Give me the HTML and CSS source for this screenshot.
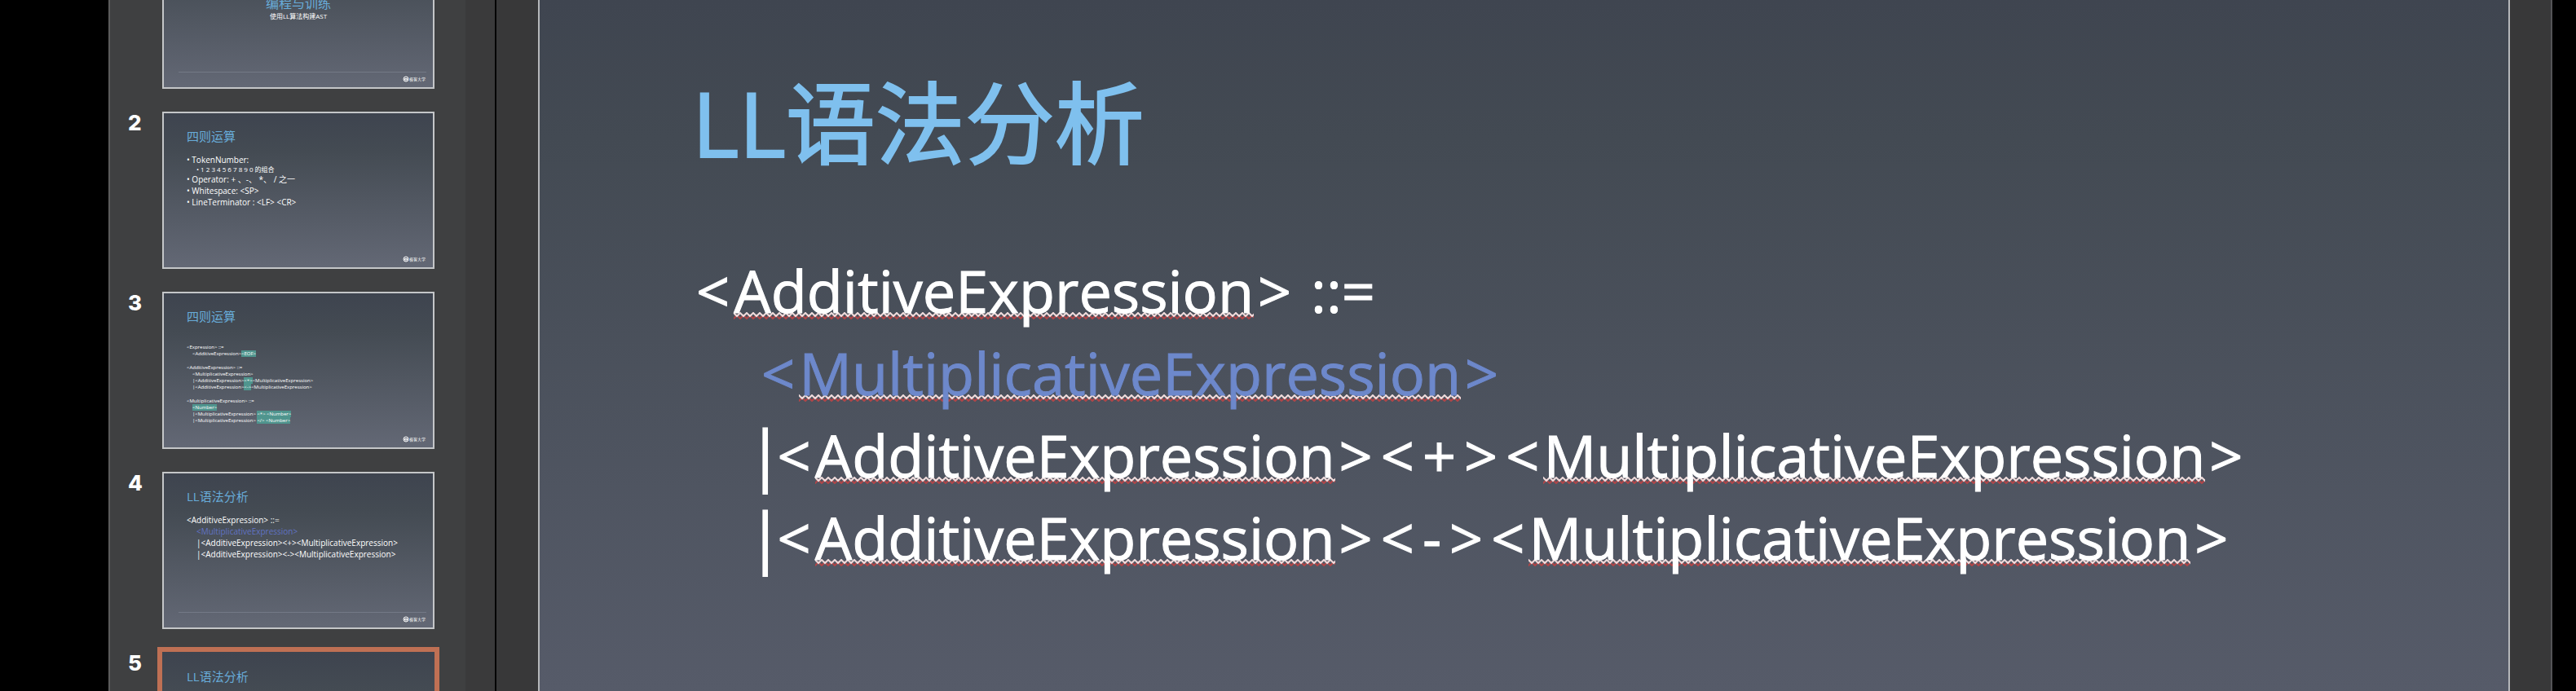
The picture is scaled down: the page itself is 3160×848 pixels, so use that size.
FILE: index.html
```html
<!DOCTYPE html>
<html lang="zh"><head><meta charset="utf-8"><title>LL语法分析</title><link rel="stylesheet" href="styles.css"></head>
<body>
<main class="app">
<nav class="rail" aria-label="Slides">
  <ol class="slides">
    <li class="item"><span class="num"></span><button class="thumb ruled cover"><span class="t-cover">编程与训练</span><span class="t-sub">使用LL算法构建AST</span><span class="brand"><svg class="mark" viewBox="0 0 8 8"><circle cx="4" cy="4" r="3"/><path d="M2.5 5V3.4h3V5z"/></svg>极客大学</span></button></li>
    <li class="item"><span class="num">2</span><button class="thumb"><span class="t-title">四则运算</span><span class="t-list"><span>• TokenNumber:</span><span class="t-deep">• 1 2 3 4 5 6 7 8 9 0 的组合</span><span>• Operator: + 、-、 *、 / 之一</span><span>• Whitespace: &lt;SP&gt;</span><span>• LineTerminator : &lt;LF&gt; &lt;CR&gt;</span></span><span class="brand"><svg class="mark" viewBox="0 0 8 8"><circle cx="4" cy="4" r="3"/><path d="M2.5 5V3.4h3V5z"/></svg>极客大学</span></button></li>
    <li class="item"><span class="num">3</span><button class="thumb"><span class="t-title">四则运算</span><span class="t-small"><span>&lt;Expression&gt; ::=</span><span class="in">&lt;AdditiveExpression&gt;<mark>&lt;EOF&gt;</mark></span><span class="gap">&lt;AdditiveExpression&gt; ::=</span><span class="in">&lt;MultiplicativeExpression&gt;</span><span class="in">|&lt;AdditiveExpression&gt;<mark>&lt;+&gt;</mark>&lt;MultiplicativeExpression&gt;</span><span class="in">|&lt;AdditiveExpression&gt;<mark>&lt;-&gt;</mark>&lt;MultiplicativeExpression&gt;</span><span class="gap">&lt;MultiplicativeExpression&gt; ::=</span><span class="in"><mark>&lt;Number&gt;</mark></span><span class="in">|&lt;MultiplicativeExpression&gt; <mark>&lt;*&gt; &lt;Number&gt;</mark></span><span class="in">|&lt;MultiplicativeExpression&gt; <mark>&lt;/&gt; &lt;Number&gt;</mark></span></span><span class="brand"><svg class="mark" viewBox="0 0 8 8"><circle cx="4" cy="4" r="3"/><path d="M2.5 5V3.4h3V5z"/></svg>极客大学</span></button></li>
    <li class="item"><span class="num">4</span><button class="thumb ruled"><span class="t-title">LL语法分析</span><span class="t-code"><span>&lt;AdditiveExpression&gt; ::=</span><span class="in t-blue">&lt;MultiplicativeExpression&gt;</span><span class="in">|&lt;AdditiveExpression&gt;&lt;+&gt;&lt;MultiplicativeExpression&gt;</span><span class="in">|&lt;AdditiveExpression&gt;&lt;-&gt;&lt;MultiplicativeExpression&gt;</span></span><span class="brand"><svg class="mark" viewBox="0 0 8 8"><circle cx="4" cy="4" r="3"/><path d="M2.5 5V3.4h3V5z"/></svg>极客大学</span></button></li>
    <li class="item"><span class="num">5</span><button class="thumb current" aria-current="true"><span class="t-title">LL语法分析</span></button></li>
  </ol>
  <div class="track"></div>
</nav>
<section class="stage">
  <article class="slide">
    <h1 class="title">LL语法分析</h1>
    <div class="grammar">
      <p><span class="op">&lt;</span><span class="typo">AdditiveExpression</span><span class="op">&gt;</span> ::=</p>
      <p class="rule blue"><span class="op">&lt;</span><span class="typo">MultiplicativeExpression</span><span class="op">&gt;</span></p>
      <p class="rule"><span class="bar">|</span><span class="op">&lt;</span><span class="typo">AdditiveExpression</span><span class="op">&gt;</span><span class="op">&lt;</span><span class="op">+</span><span class="op">&gt;</span><span class="op">&lt;</span><span class="typo">MultiplicativeExpression</span><span class="op">&gt;</span></p>
      <p class="rule"><span class="bar">|</span><span class="op">&lt;</span><span class="typo">AdditiveExpression</span><span class="op">&gt;</span><span class="op">&lt;</span><span class="op">-</span><span class="op">&gt;</span><span class="op">&lt;</span><span class="typo">MultiplicativeExpression</span><span class="op">&gt;</span></p>
    </div>
  </article>
</section>
</main>
</body></html>
```
FILE: styles.css
```css
* { box-sizing: border-box; }
body { margin: 0; background: #000; color: #fff; font-family: "Open Sans", "Noto Sans CJK SC", sans-serif; overflow: hidden; }
.app { display: flex; height: 100vh; padding: 0 29px 0 133px; overflow: hidden; }

/* Slide list */
.rail { display: flex; flex: none; width: 476px; background: #3f4041; border-left: 2px solid #5b5b5b; border-right: 2px solid #050505; overflow: hidden; }
.slides { flex: 1; margin: -84px 0 0; padding: 0; list-style: none; display: flex; flex-direction: column; gap: 28px; }
.track { width: 36px; background: #3a3a3b; }
.item { display: flex; flex: none; height: 193px; }
.num { width: 64px; padding-left: 22px; font: 800 26px/28px Inter, sans-serif; }
.thumb { position: relative; display: flex; flex-direction: column; flex: none; width: 334px; height: 193px; padding: 18px 28px; border: 2px solid #c4c6c8; background: linear-gradient(#3e444f, #444b53 25%, #636875); color: #fff; font-family: inherit; text-align: left; white-space: nowrap; }
.current { outline: 6px solid #bf7054; border: 0; padding: 20px 30px; }
.ruled::after { content: ""; position: absolute; left: 18px; right: 8px; bottom: 18px; height: 1px; background: #737986; }
.cover { padding-top: 76px; text-align: center; }
.t-title { color: #68acd9; font-size: 15px; line-height: 20px; }
.t-cover { color: #68acd9; font-size: 16px; line-height: 20px; }
.t-sub { font-size: 8px; line-height: 12px; }
.t-list { display: flex; flex-direction: column; font-size: 10px; line-height: 14px; margin-top: 12px; }
.t-deep { padding-left: 12px; font-size: 8px; line-height: 10px; }
.t-small { display: flex; flex-direction: column; font-size: 6px; line-height: 8px; margin-top: 24px; }
.t-small .in { padding-left: 7px; }
.gap { margin-top: 9px; }
.t-code { display: flex; flex-direction: column; font-size: 10px; line-height: 14px; margin-top: 12px; }
.t-code .in { padding-left: 12px; }
.t-code .t-blue { color: #6173c4; }
mark { background: #4f958e; color: #fff; }
.brand { position: absolute; right: 9px; bottom: 6px; font-size: 5px; line-height: 8px; display: flex; }
.mark { width: 8px; height: 8px; fill: none; stroke: #fff; }

/* Editing area */
.stage { flex: 1; padding: 0 50px 0 51px; background: #383839; border-right: 2px solid #555557; }
.slide { height: 100%; padding: 70px 0 0 187px; border: solid #b5b7ba; border-width: 0 2px; background: linear-gradient(#3f4550, #434a53 20%, #565b69); }
.title { margin: 0; color: #7fc0ee; font-weight: 400; font-size: 110px; line-height: 160px; -webkit-text-stroke: 2px currentColor; }
.grammar { margin-top: 76px; font-size: 72px; line-height: 101px; white-space: nowrap; -webkit-text-stroke: 1px currentColor; }
.grammar p { margin: 0; }
.rule { padding-left: 80px; }
.blue { color: #6d88cb; }
.op { padding: 0 5px; }
.bar { font-family: "Noto Sans CJK SC", sans-serif; line-height: 0; -webkit-text-stroke: 2px currentColor; }
.typo { background: url("data:image/svg+xml,%3Csvg xmlns='http://www.w3.org/2000/svg' width='8' height='9'%3E%3Cpath d='M-1 7L0 8L4 4L8 8L9 7' fill='none' stroke='%23b04548' stroke-width='2'/%3E%3Cpath d='M-1 1L0 1L4 5L8 1L9 1' fill='none' stroke='%23f0dcdc' stroke-width='2'/%3E%3C/svg%3E") 0 calc(100% - 13px) repeat-x; }
```
